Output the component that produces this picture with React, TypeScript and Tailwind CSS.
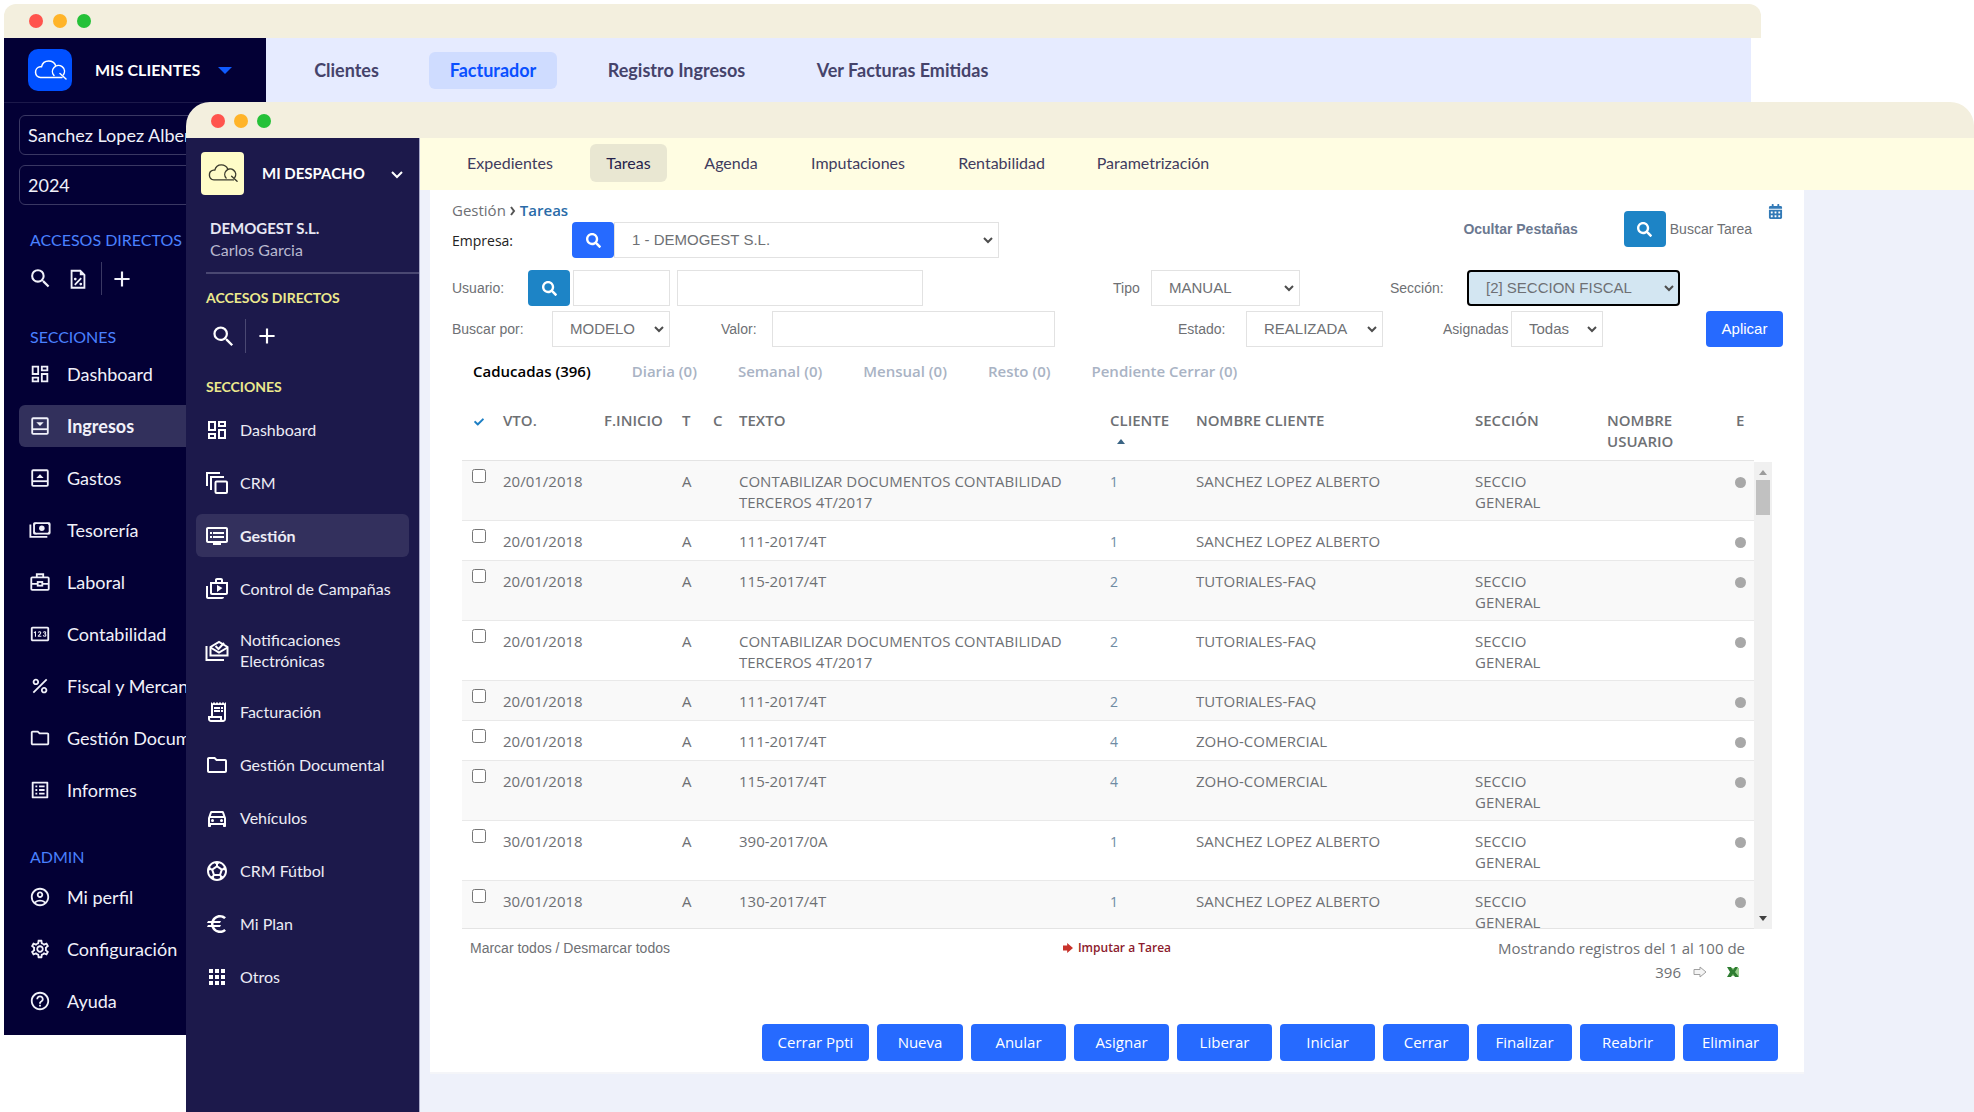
import React from 'react';
import clsx from 'clsx';
import { FaCalendarAlt, FaCheck, FaSearch } from 'react-icons/fa';
import {
  MdAdd,
  MdApps,
  MdEuro,
  MdHelpOutline,
  MdOutlineAccountCircle,
  MdOutlineDashboard,
  MdOutlineDirectionsCar,
  MdOutlineDvr,
  MdOutlineFolder,
  MdOutlineListAlt,
  MdOutlinePin,
  MdOutlineReceiptLong,
  MdOutlineSettings,
  MdOutlineShopTwo,
  MdPercent,
  MdSearch,
  MdSportsSoccer,
} from 'react-icons/md';

function LineIcon({ size = 24, children }: { size?: number; children: React.ReactNode }) {
  return (
    <svg width={size} height={size} viewBox="0 0 24 24" fill="none" stroke="currentColor" strokeWidth="2">
      {children}
    </svg>
  );
}

const IncomeIcon = ({ size }: any) => (
  <LineIcon size={size}>
    <rect x="3.5" y="3.5" width="17" height="17" rx="1" />
    <path d="M3.5 15.5h17" />
    <path d="M8 8h8l-4 4z" fill="currentColor" stroke="none" />
  </LineIcon>
);

const ExpenseIcon = ({ size }: any) => (
  <LineIcon size={size}>
    <rect x="3.5" y="3.5" width="17" height="17" rx="1" />
    <path d="M3.5 15.5h17" />
    <path d="M8 12h8l-4-4z" fill="currentColor" stroke="none" />
  </LineIcon>
);

const CashIcon = ({ size }: any) => (
  <LineIcon size={size}>
    <path d="M1.5 6v13.5H20" />
    <rect x="5.5" y="4.5" width="17" height="11.5" rx="1" />
    <circle cx="14" cy="10.2" r="3" fill="currentColor" stroke="none" />
    <path d="M5 4h4L5 8zM23 4h-4l4 4zM5 16.500h4l-4-4zM23 16.500h-4l4-4z" fill="currentColor" stroke="none" />
  </LineIcon>
);

const BriefcaseIcon = ({ size }: any) => (
  <LineIcon size={size}>
    <rect x="2.500" y="7" width="19" height="13.500" rx="1" />
    <path d="M8.500 7V3.500h7V7M2.500 14h7M14.500 14h7" />
    <rect x="9.500" y="12" width="5" height="4" />
  </LineIcon>
);

const StackIcon = ({ size }: any) => (
  <LineIcon size={size}>
    <path d="M2 15V2h13" />
    <path d="M6 19V6h13" />
    <rect x="10.500" y="10.500" width="11.500" height="11.500" rx="1" />
  </LineIcon>
);

const MailsIcon = ({ size }: any) => (
  <LineIcon size={size}>
    <path d="M1.500 8v14H19" />
    <path d="M5.500 17.500V9L14 4l8.500 5v8.500z" />
    <path d="M5.500 9.500l8.500 5 8.500-5M10.500 8l3 3 5.500-6" />
  </LineIcon>
);

const FilePercentIcon = () => (
  <LineIcon size={22}>
    <path d="M14.500 3H5v18.500h14V7.500z" />
    <path d="M14 2v6h6z" fill="currentColor" stroke="none" />
    <path d="M15.500 11l-7 7.500" />
    <circle cx="9" cy="12" r="1.500" fill="currentColor" stroke="none" />
    <circle cx="15" cy="17.500" r="1.500" fill="currentColor" stroke="none" />
  </LineIcon>
);

const CloudLogo = ({ width }: { width: number }) => (
  <svg width={width} viewBox="0 0 33 20" fill="none" stroke="currentColor" strokeWidth="1.500" strokeLinecap="round">
    <path d="M28 17.500H6.500a5.400 5.400 0 0 1-.500-10.700h1.500C8.300 3.400 11 1 14.700 1c3.300 0 5.800 1.700 7 4.600" />
    <path d="M20 15.500a6 6 0 1 1 9.500-.8M26 13.500l6 5.500" />
  </svg>
);

const Dots = () => (
  <>
    <span className="size-[14px] rounded-full bg-[#ff544d]" />
    <span className="size-[14px] rounded-full bg-[#ffb429]" />
    <span className="size-[14px] rounded-full bg-[#25c138]" />
  </>
);

const clientSections = [
  { label: 'Dashboard', icon: MdOutlineDashboard },
  { label: 'Ingresos', icon: IncomeIcon, active: true },
  { label: 'Gastos', icon: ExpenseIcon },
  { label: 'Tesorería', icon: CashIcon },
  { label: 'Laboral', icon: BriefcaseIcon },
  { label: 'Contabilidad', icon: MdOutlinePin },
  { label: 'Fiscal y Mercantil', icon: MdPercent },
  { label: 'Gestión Documental', icon: MdOutlineFolder },
  { label: 'Informes', icon: MdOutlineListAlt },
];

const adminSections = [
  { label: 'Mi perfil', icon: MdOutlineAccountCircle },
  { label: 'Configuración', icon: MdOutlineSettings },
  { label: 'Ayuda', icon: MdHelpOutline },
];

const officeSections = [
  { label: 'Dashboard', icon: MdOutlineDashboard },
  { label: 'CRM', icon: StackIcon },
  { label: 'Gestión', icon: MdOutlineDvr, active: true },
  { label: 'Control de Campañas', icon: MdOutlineShopTwo },
  { label: 'Notificaciones Electrónicas', icon: MailsIcon },
  { label: 'Facturación', icon: MdOutlineReceiptLong },
  { label: 'Gestión Documental', icon: MdOutlineFolder },
  { label: 'Vehículos', icon: MdOutlineDirectionsCar },
  { label: 'CRM Fútbol', icon: MdSportsSoccer },
  { label: 'Mi Plan', icon: MdEuro },
  { label: 'Otros', icon: MdApps },
];

function ClientLink({ item }: { item: any }) {
  const Icon = item.icon;
  return (
    <a
      href="#"
      className={clsx(
        'flex h-[42px] items-center gap-4 rounded-md pl-[10px] text-[18px] whitespace-nowrap',
        item.active ? 'bg-[#32305c] font-bold' : 'font-normal'
      )}
    >
      <Icon size={22} />
      {item.label}
    </a>
  );
}

function ClientsWindow() {
  return (
    <div className="absolute top-1 right-[213px] left-1 font-['Lato',sans-serif]">
      <div className="flex h-[34px] items-center gap-[10px] rounded-t-[12px] bg-[#f3efde] pl-[25px]">
        <Dots />
      </div>
      <div className="mr-[10px] flex items-start bg-white">
        <aside className="flex w-[262px] shrink-0 flex-col bg-[#030035] pb-[13px] text-[#f1f1fa]">
          <div className="flex h-[65px] items-center border-b border-[#1c194a] pl-6">
            <span className="flex h-[42px] w-11 items-center justify-center rounded-[10px] bg-[#0050ff] text-white">
              <CloudLogo width={33} />
            </span>
            <button type="button" className="ml-[23px] flex items-center gap-[18px] text-[16px] font-bold text-white">
              MIS CLIENTES
              <svg width="14" height="7" viewBox="0 0 14 7" fill="#0f5bff">
                <path d="M0 0h14L7 7z" />
              </svg>
            </button>
          </div>
          <div className="flex flex-col gap-[10px] pt-3 pr-4 pl-[15px]">
            <input
              aria-label="Cliente"
              defaultValue="Sanchez Lopez Alberto"
              className="h-10 w-full rounded-md border border-[#3a3863] px-2 text-[18px]"
            />
            <input
              aria-label="Ejercicio"
              defaultValue="2024"
              className="h-10 w-full rounded-md border border-[#3a3863] px-2 text-[18px]"
            />
          </div>
          <h2 className="mt-[25px] pl-[26px] text-[16px] leading-5 text-[#4a80ff]">ACCESOS DIRECTOS</h2>
          <div className="mt-3 flex h-[33px] items-center pl-6">
            <button type="button" aria-label="Buscar">
              <MdSearch size={25} />
            </button>
            <button type="button" aria-label="Factura" className="ml-[14px]">
              <FilePercentIcon />
            </button>
            <span className="ml-3 h-full w-px bg-[#3a3863]" />
            <button type="button" aria-label="Añadir" className="ml-[7px]">
              <MdAdd size={26} />
            </button>
          </div>
          <h2 className="mt-8 pl-[26px] text-[16px] leading-5 text-[#4a80ff]">SECCIONES</h2>
          <nav className="mt-[6px] flex flex-col gap-[10px] pr-4 pl-[15px]">
            {clientSections.map((s) => (
              <ClientLink key={s.label} item={s} />
            ))}
          </nav>
          <h2 className="mt-9 pl-[26px] text-[16px] leading-5 text-[#4a80ff]">ADMIN</h2>
          <nav className="mt-[9px] flex flex-col gap-[10px] pr-4 pl-[15px]">
            {adminSections.map((s) => (
              <ClientLink key={s.label} item={s} />
            ))}
          </nav>
        </aside>
        <nav className="flex h-[65px] flex-1 items-center gap-[30px] bg-[#e6ebff] pl-7 text-[18px] font-bold text-[#45436b]">
          <a href="#" className="w-[105px] text-center">Clientes</a>
          <a href="#" className="w-[128px] rounded-md bg-[#cfdcff] py-[5px] text-center text-[#0a50ff]">Facturador</a>
          <a href="#" className="w-[179px] text-center">Registro Ingresos</a>
          <a href="#" className="w-[213px] text-center">Ver Facturas Emitidas</a>
        </nav>
      </div>
    </div>
  );
}

function OfficeSidebar() {
  return (
    <aside className="w-[234px] shrink-0 border-r border-[#a9abc9] bg-[#1c194b] font-['Lato',sans-serif] text-[#ececf5]">
      <div className="flex items-center pt-[14px] pr-3 pl-[15px]">
        <span className="flex size-[43px] items-center justify-center rounded bg-[#fffcc8] text-[#3a3a2c]">
          <CloudLogo width={30} />
        </span>
        <button type="button" className="ml-[18px] flex flex-1 items-center justify-between text-[15px] font-bold text-white">
          MI DESPACHO
          <svg width="20" height="20" viewBox="0 0 20 20" fill="none" stroke="currentColor" strokeWidth="2">
            <path d="M5 8l5 5 5-5" />
          </svg>
        </button>
      </div>
      <div className="ml-5 border-b-2 border-[#4a4872] pt-[22px] pb-[11px] pl-1">
        <div className="text-[15px] leading-[22px] font-bold text-[#e6e6f2]">DEMOGEST S.L.</div>
        <div className="text-[16px] leading-[22px] text-[#b9b8cf]">Carlos Garcia</div>
      </div>
      <h2 className="mt-[14px] pl-5 text-[14px] leading-5 font-bold text-[#ece98d]">ACCESOS DIRECTOS</h2>
      <div className="mt-[11px] flex h-[34px] items-center pl-6 text-white">
        <button type="button" aria-label="Buscar">
          <MdSearch size={27} />
        </button>
        <span className="ml-2 h-full w-px bg-[#4a4872]" />
        <button type="button" aria-label="Añadir" className="ml-2">
          <MdAdd size={26} />
        </button>
      </div>
      <h2 className="mt-6 pl-5 text-[14px] leading-5 font-bold text-[#ece98d]">SECCIONES</h2>
      <nav className="mt-[11px] flex flex-col gap-[10px] pr-[10px] pl-[10px]">
        {officeSections.map((s) => {
          const Icon = s.icon;
          return (
            <a
              key={s.label}
              href="#"
              className={clsx(
                'flex min-h-[43px] items-center gap-[11px] rounded-md py-[9px] pl-[9px] text-[16px] leading-[21px]',
                s.active && 'bg-[#33305d] font-bold'
              )}
            >
              <span className="shrink-0 text-white">
                <Icon size={24} />
              </span>
              {s.label}
            </a>
          );
        })}
      </nav>
    </aside>
  );
}

function SearchButton({ label, className }: { label: string; className: string }) {
  return (
    <button
      type="button"
      aria-label={label}
      className={clsx('flex h-9 w-[42px] shrink-0 items-center justify-center rounded text-white', className)}
    >
      <FaSearch size={15} />
    </button>
  );
}

function Select({ id, value, className, focused }: { id: string; value: string; className: string; focused?: boolean }) {
  return (
    <div className={clsx('relative shrink-0', className)}>
      <select
        id={id}
        className={clsx(
          "h-9 w-full appearance-none pr-6 pl-[17px] font-['Liberation_Sans',sans-serif] text-[15px] text-[#6e7074]",
          focused ? 'rounded border-2 border-black bg-[#d3e6f2]' : 'border border-[#e2e2e2] bg-white'
        )}
      >
        <option>{value}</option>
      </select>
      <svg
        className="pointer-events-none absolute top-[13px] right-[6px] text-[#4d4d4d]"
        width="10"
        height="10"
        viewBox="0 0 10 10"
        fill="none"
        stroke="currentColor"
        strokeWidth="2"
      >
        <path d="M1 3l4 4 4-4" />
      </svg>
    </div>
  );
}

function Filters() {
  const input = 'h-9 border border-[#e2e2e2] bg-white px-2';
  return (
    <form className="pr-[21px] pl-[22px] font-['Liberation_Sans',sans-serif] text-[14px] text-[#6e7074]">
      <div className="flex items-start justify-between font-['Open_Sans',sans-serif]">
        <div>
          <div className="flex items-center gap-1 pt-[9px] text-[15px] leading-[23px]">
            <a href="#">Gestión</a>
            <svg width="6" height="10" viewBox="0 0 6 10" fill="none" stroke="#555" strokeWidth="2">
              <path d="M1 1l3 4-3 4" />
            </svg>
            <a href="#" className="font-semibold text-[#2a6ba8]">Tareas</a>
          </div>
          <div className="flex items-center">
            <label htmlFor="empresa" className="w-[120px] text-[14px] text-[#222]">Empresa:</label>
            <SearchButton label="Buscar empresa" className="bg-[#266aff]" />
            <Select id="empresa" value="1 - DEMOGEST S.L." className="w-[385px]" />
          </div>
        </div>
        <div className="flex items-start pt-[14px] font-['Liberation_Sans',sans-serif]">
          <div className="flex items-center pt-[7px]">
            <a href="#" className="mr-[46px] font-bold text-[#6b7890]">Ocultar Pestañas</a>
            <SearchButton label="Buscar Tarea" className="bg-[#1d84c6]" />
            <span className="ml-1">Buscar Tarea</span>
          </div>
          <button type="button" aria-label="Calendario" className="ml-4 text-[#337ab7]">
            <FaCalendarAlt size={15} />
          </button>
        </div>
      </div>
      <div className="mt-3 flex items-center">
        <label htmlFor="usuario" className="w-[76px]">Usuario:</label>
        <SearchButton label="Buscar usuario" className="bg-[#1d84c6]" />
        <input id="usuario" className={clsx(input, 'ml-[3px] w-[97px]')} />
        <input aria-label="Nombre de usuario" className={clsx(input, 'ml-[7px] w-[246px]')} />
        <label htmlFor="tipo" className="ml-auto w-[38px]">Tipo</label>
        <Select id="tipo" value="MANUAL" className="w-[149px]" />
        <label htmlFor="seccion" className="ml-[90px] w-[77px]">Sección:</label>
        <Select id="seccion" value="[2] SECCION FISCAL" className="mr-[103px] w-[213px]" focused />
      </div>
      <div className="mt-[5px] flex items-center">
        <label htmlFor="buscar" className="w-[100px]">Buscar por:</label>
        <Select id="buscar" value="MODELO" className="w-[118px]" />
        <label htmlFor="valor" className="ml-[51px] w-[51px]">Valor:</label>
        <input id="valor" className={clsx(input, 'w-[283px]')} />
        <label htmlFor="estado" className="ml-auto w-[68px]">Estado:</label>
        <Select id="estado" value="REALIZADA" className="w-[137px]" />
        <label htmlFor="asignadas" className="ml-[60px] w-[68px]">Asignadas</label>
        <Select id="asignadas" value="Todas" className="w-[92px]" />
        <button type="button" className="ml-[103px] h-9 w-[77px] rounded bg-[#266aff] text-[15px] text-white">Aplicar</button>
      </div>
    </form>
  );
}

const tabs = ['Diaria (0)', 'Semanal (0)', 'Mensual (0)', 'Resto (0)', 'Pendiente Cerrar (0)'];

const tasks = [
  { vto: '20/01/2018', text: 'CONTABILIZAR DOCUMENTOS CONTABILIDAD TERCEROS 4T/2017', client: 1, name: 'SANCHEZ LOPEZ ALBERTO', section: 'SECCIO GENERAL' },
  { vto: '20/01/2018', text: '111-2017/4T', client: 1, name: 'SANCHEZ LOPEZ ALBERTO', section: '' },
  { vto: '20/01/2018', text: '115-2017/4T', client: 2, name: 'TUTORIALES-FAQ', section: 'SECCIO GENERAL' },
  { vto: '20/01/2018', text: 'CONTABILIZAR DOCUMENTOS CONTABILIDAD TERCEROS 4T/2017', client: 2, name: 'TUTORIALES-FAQ', section: 'SECCIO GENERAL' },
  { vto: '20/01/2018', text: '111-2017/4T', client: 2, name: 'TUTORIALES-FAQ', section: '' },
  { vto: '20/01/2018', text: '111-2017/4T', client: 4, name: 'ZOHO-COMERCIAL', section: '' },
  { vto: '20/01/2018', text: '115-2017/4T', client: 4, name: 'ZOHO-COMERCIAL', section: 'SECCIO GENERAL' },
  { vto: '30/01/2018', text: '390-2017/0A', client: 1, name: 'SANCHEZ LOPEZ ALBERTO', section: 'SECCIO GENERAL' },
  { vto: '30/01/2018', text: '130-2017/4T', client: 1, name: 'SANCHEZ LOPEZ ALBERTO', section: 'SECCIO GENERAL' },
];

function TasksTable() {
  return (
    <div className="mt-[29px] mr-8 ml-8 flex text-[15px] leading-[21px] text-[#6e7074]">
      <div className="h-[519px] flex-1 overflow-hidden border-b border-[#e4e4e4]">
        <table className="w-full table-fixed border-separate border-spacing-0 text-left">
          <colgroup>
            <col className="w-[41px]" />
            <col className="w-[101px]" />
            <col className="w-[78px]" />
            <col className="w-[31px]" />
            <col className="w-[26px]" />
            <col />
            <col className="w-[86px]" />
            <col className="w-[279px]" />
            <col className="w-[132px]" />
            <col className="w-[129px]" />
            <col className="w-[18px]" />
          </colgroup>
          <thead>
            <tr className="align-top [&>th]:border-b [&>th]:border-[#e4e4e4] [&>th]:pb-2 [&>th]:font-semibold">
              <th aria-label="Seleccionar">
                <FaCheck size={10} className="mt-[7px] ml-3 text-[#1d7fc4]" />
              </th>
              <th>VTO.</th>
              <th>F.INICIO</th>
              <th>T</th>
              <th>C</th>
              <th>TEXTO</th>
              <th>
                CLIENTE
                <svg width="8" height="5" viewBox="0 0 8 5" fill="#3a6484" className="mt-2 ml-[7px]">
                  <path d="M0 5h8L4 0z" />
                </svg>
              </th>
              <th>NOMBRE CLIENTE</th>
              <th>SECCIÓN</th>
              <th className="pr-10">NOMBRE USUARIO</th>
              <th>E</th>
            </tr>
          </thead>
          <tbody>
            {tasks.map((t, i) => (
              <tr
                key={i}
                className="h-10 align-top odd:bg-[#f9f9f9] [&>td]:border-b [&>td]:border-[#e9e9e9] [&>td]:pt-[10px] [&>td]:pb-[7px]"
              >
                <td>
                  <input type="checkbox" aria-label={`Seleccionar tarea ${i + 1}`} className="-mt-[2px] ml-[10px] block size-[14px]" />
                </td>
                <td>{t.vto}</td>
                <td />
                <td>A</td>
                <td />
                <td className="pr-6">{t.text}</td>
                <td className="text-[14px] text-[#6f8ba3]">{t.client}</td>
                <td>{t.name}</td>
                <td className="pr-12">{t.section}</td>
                <td />
                <td>
                  <span className="mt-[6px] -ml-px block size-[11px] rounded-full bg-[#a8a8a8]" />
                </td>
              </tr>
            ))}
          </tbody>
        </table>
      </div>
      <div className="mt-[52px] flex w-[18px] flex-col items-center bg-[#f0f0f0] py-2">
        <svg width="8" height="5" viewBox="0 0 8 5" fill="#9b9b9b">
          <path d="M0 5h8L4 0z" />
        </svg>
        <span className="mt-[5px] h-[35px] w-[14px] bg-[#c1c1c1]" />
        <svg width="8" height="5" viewBox="0 0 8 5" fill="#404040" className="mt-auto">
          <path d="M0 0h8L4 5z" />
        </svg>
      </div>
    </div>
  );
}

const actions = [
  { label: 'Cerrar Ppti', width: 'w-[107px]' },
  { label: 'Nueva', width: 'w-[86px]' },
  { label: 'Anular', width: 'w-[95px]' },
  { label: 'Asignar', width: 'w-[95px]' },
  { label: 'Liberar', width: 'w-[95px]' },
  { label: 'Iniciar', width: 'w-[95px]' },
  { label: 'Cerrar', width: 'w-[86px]' },
  { label: 'Finalizar', width: 'w-[95px]' },
  { label: 'Reabrir', width: 'w-[95px]' },
  { label: 'Eliminar', width: 'w-[95px]' },
];

function TasksPanel() {
  return (
    <div className="mr-[170px] ml-[10px] border-b-2 border-[#f4f5f8] bg-white font-['Open_Sans',sans-serif]">
      <Filters />
      <div className="mt-[14px] flex gap-[41px] pl-[43px] text-[15px] leading-5 font-semibold text-[#a9b3c4]">
        <button type="button" className="text-black">Caducadas (396)</button>
        {tabs.map((t) => (
          <button key={t} type="button">{t}</button>
        ))}
      </div>
      <TasksTable />
      <div className="mr-[59px] ml-10 flex items-start justify-between pt-[7px] text-[#6e7074]">
        <button type="button" className="w-[282px] text-left font-['Liberation_Sans',sans-serif] text-[14px] leading-6">
          Marcar todos / Desmarcar todos
        </button>
        <button type="button" className="flex items-center gap-1 text-[12px] leading-6 font-semibold text-[#8c1a2c]">
          <svg width="12" height="10" viewBox="0 0 12 12" fill="#c8332b">
            <path d="M0 3h5V0l7 6-7 6V9H0z" />
          </svg>
          Imputar a Tarea
        </button>
        <div className="w-[264px] text-right text-[15px] leading-6">
          Mostrando registros del 1 al 100 de
          <div className="flex items-center justify-end pr-[6px]">
            396
            <button type="button" aria-label="Siguiente" className="ml-3">
              <svg width="14" height="12" viewBox="0 0 14 12" fill="#f4f4f4" stroke="#a0a0a0">
                <path d="M1 3.500h6V1l6 5-6 5V8.500H1z" />
              </svg>
            </button>
            <button type="button" aria-label="Exportar a Excel" className="ml-5">
              <svg width="12" height="10" viewBox="0 0 12 10">
                <path d="M5 1h7v8H5z" fill="#9ccf8f" />
                <path d="M0 0h4l2 3 2-3h3L8 5l4 5H8L6 7l-2 3H0l3-5z" fill="#2f7d32" />
              </svg>
            </button>
          </div>
        </div>
      </div>
      <div className="flex justify-end gap-2 pt-10 pr-[26px] pb-[11px] text-[15px] text-white">
        {actions.map((a) => (
          <button key={a.label} type="button" className={clsx('h-[37px] rounded bg-[#266aff]', a.width)}>
            {a.label}
          </button>
        ))}
      </div>
    </div>
  );
}

function OfficeWindow() {
  return (
    <div className="relative ml-[186px] flex flex-1 flex-col">
      <div className="flex h-9 items-center gap-[9px] rounded-t-[24px] bg-[#f3efde] pt-px pl-[25px]">
        <Dots />
      </div>
      <div className="flex flex-1">
        <OfficeSidebar />
        <main className="flex-1 bg-[#eef1fa]">
          <nav className="flex h-[52px] items-center gap-[21px] bg-[#fffde2] pb-[6px] pl-[31px] font-['Lato',sans-serif] text-[16px] text-[#3f3c5e] [&>a]:mt-1 [&>a]:text-center">
            <a href="#" className="w-[118px]">Expedientes</a>
            <a href="#" className="w-[77px] rounded-md bg-[#e9e7d2] py-[7px] text-[#25224b]">Tareas</a>
            <a href="#" className="w-[86px]">Agenda</a>
            <a href="#" className="w-[126px]">Imputaciones</a>
            <a href="#" className="w-[119px]">Rentabilidad</a>
            <a href="#" className="w-[142px]">Parametrización</a>
          </nav>
          <TasksPanel />
        </main>
      </div>
    </div>
  );
}

export default function App() {
  return (
    <div className="relative flex min-h-screen flex-col overflow-hidden bg-white pt-[102px]">
      <ClientsWindow />
      <OfficeWindow />
    </div>
  );
}
